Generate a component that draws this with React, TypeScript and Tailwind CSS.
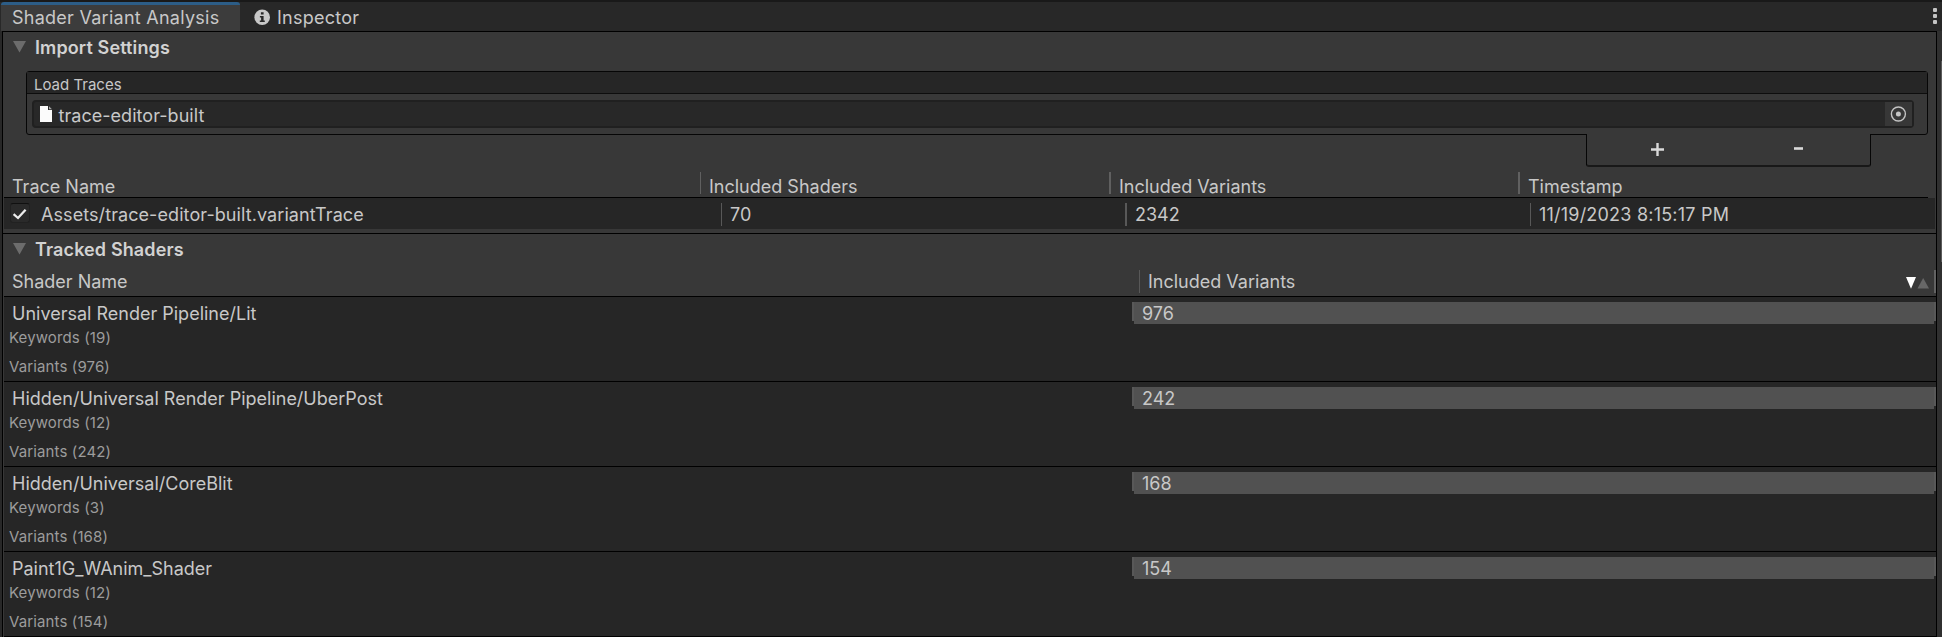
import React from "react";

const shaders = [
  { name: "Universal Render Pipeline/Lit", keywords: 19, variants: 976 },
  { name: "Hidden/Universal Render Pipeline/UberPost", keywords: 12, variants: 242 },
  { name: "Hidden/Universal/CoreBlit", keywords: 3, variants: 168 },
  { name: "Paint1G_WAnim_Shader", keywords: 12, variants: 154 },
];

function Foldout({ title }: { title: string }) {
  return (
    <div className="flex items-start pl-[10px] pt-[5px]">
      <svg className="mt-[4px] h-[12px] w-[13px]" viewBox="0 0 13 12">
        <path d="M0 0H13L6.5 11.5Z" fill="#6c6c6c" />
      </svg>
      <h2 className="pl-[9px] font-semibold tracking-[0.12px] text-[#d2d2d2]">{title}</h2>
    </div>
  );
}

function TabBar() {
  return (
    <div className="flex h-[31px] items-stretch border-t-2 border-[#191919] bg-[#282828] tracking-[0.26px]">
      <div className="ml-px w-[239px] rounded-t-[3px] border-t-[3px] border-[#2c5d87] bg-[#3c3c3c] pl-[11px] pt-[2px]">
        Shader Variant Analysis
      </div>
      <div className="flex grow pl-[14px] pt-[5px]">
        <svg className="mt-[2px] h-[17px] w-[17px]" viewBox="0 0 17 17">
          <circle cx="8.2" cy="8.2" r="7.8" fill="#c8c8c8" />
          <path d="M6.9 3.2h2.7v2.3H6.9zM5.9 6.9h3.7v4.6h1.2v1.6H5.8v-1.6h1.3V8.4H5.9z" fill="#282828" />
        </svg>
        <span className="pl-[6px]">Inspector</span>
      </div>
      <div className="mr-[5px] flex flex-col gap-[2px] pt-[6px]">
        <i className="size-[4px] rounded-[1px] bg-[#c4c4c4]" />
        <i className="size-[4px] rounded-[1px] bg-[#c4c4c4]" />
        <i className="size-[4px] rounded-[1px] bg-[#c4c4c4]" />
      </div>
    </div>
  );
}

function TraceList() {
  return (
    <div className="ml-[23px] mr-[8px]">
      <div className="h-[64px] rounded-[3px] border border-[#060606]">
        <div className="h-[22px] border-b border-[#0d0d0d] bg-[#262626] pl-[7px] pt-[3px] text-[15px] leading-[19px]">
          Load Traces
        </div>
        <div className="ml-[5px] mr-[13px] mt-[6px] flex h-[28px] rounded-[4px] border-2 border-[#202020] bg-[#282828]">
          <svg className="ml-[6px] mt-[4px] h-[16px] w-[12px]" viewBox="0 0 12 16">
            <path d="M0 0H8V4H12V16H0Z" fill="#fbfbfb" />
            <path d="M9 0.3L12 3.3H9Z" fill="#a8a8a8" />
          </svg>
          <span className="grow pl-[6.5px] pt-[3px] tracking-[0.04px]">trace-editor-built</span>
          <div className="w-[27px] bg-[#373737]">
            <svg className="h-[24px] w-[27px]" viewBox="0 0 27 24">
              <circle cx="13.4" cy="12" r="7" fill="none" stroke="#c4c4c4" strokeWidth="1.4" />
              <circle cx="13.4" cy="12" r="2.5" fill="#c4c4c4" />
            </svg>
          </div>
        </div>
      </div>
      <div className="relative -mt-px ml-auto mr-[57px] h-[33px] w-[285px] rounded-b-[3px] border-x border-b-2 border-x-[#060606] border-b-[#181818] bg-[#383838]">
        <svg className="h-[31px] w-[283px]" viewBox="0 0 283 31">
          <path d="M64 15.5H77M70.5 9V22" stroke="#dadada" strokeWidth="2.4" />
          <path d="M207 14.5H216" stroke="#dadada" strokeWidth="2.6" />
        </svg>
      </div>
    </div>
  );
}

function TraceTable() {
  return (
    <div className="ml-px">
      <div className="mr-[8px] flex h-[31px] border-b border-black pt-[5px]">
        <div className="w-[696px] pl-[8px] pt-[4px]">Trace Name</div>
        <div className="h-[22px] w-[409px] border-l border-[#606060] pl-[8px] pt-[4px]">Included Shaders</div>
        <div className="h-[22px] w-[409px] border-l-2 border-[#606060] pl-[8px] pt-[4px]">Included Variants</div>
        <div className="h-[22px] border-l-2 border-[#606060] pl-[8px] pt-[4px]">Timestamp</div>
      </div>
      <div className="mr-px flex h-[31px] bg-[#262626] pt-[5px]">
        <div className="flex w-[717px] pl-[6px]">
          <div className="h-[20px] w-[20px] rounded-[3px] border border-[#212121] border-t-[#101010] bg-[#2a2a2a]">
            <svg className="h-[18px] w-[18px]" viewBox="0 0 18 18">
              <path d="M2.6 10.2L7 14L14.6 5.8" fill="none" stroke="#ececec" strokeWidth="2.3" />
            </svg>
          </div>
          <span className="pl-[11px] pt-px tracking-[0.08px]">Assets/trace-editor-built.variantTrace</span>
        </div>
        <div className="h-[23px] w-[404px] border-l border-[#585858] pl-[8px] pt-px">70</div>
        <div className="h-[23px] w-[405px] border-l-2 border-[#585858] pl-[8px] pt-px">2342</div>
        <div className="h-[23px] border-l border-[#585858] pl-[8px] pt-px tracking-[0.21px]">11/19/2023 8:15:17 PM</div>
      </div>
    </div>
  );
}

function ShaderTable() {
  return (
    <div className="ml-px">
      <div className="flex h-[27px] border-b border-black">
        <div className="w-[1135px] pl-[8px] pt-px">Shader Name</div>
        <div className="flex h-[23px] grow border-l border-[#585858] pl-[8px] pt-px">
          <span className="grow">Included Variants</span>
          <svg className="mr-[5px] mt-[6px] h-[12px] w-[23px]" viewBox="0 0 23 12">
            <path d="M0 0H10L5 11.8Z" fill="#ffffff" />
            <path d="M11.5 11.6H23L17.2 1Z" fill="#676767" />
          </svg>
        </div>
        <div className="h-[23px] w-[2px] bg-[#626262]" />
      </div>
      {shaders.map((s) => (
        <div key={s.name} className="flex h-[85px] border-b border-black bg-[#262626]">
          <div className="w-[1128px] pt-[6px]">
            <div className="pl-[8px]">{s.name}</div>
            <div className="pl-[5px] pt-[4px] text-[15px] leading-[19px] tracking-[0.12px] text-[#9c9c9c]">
              <div>Keywords ({s.keywords})</div>
              <div className="pt-[10px]">Variants ({s.variants})</div>
            </div>
          </div>
          <div className="flex grow pt-[5px]">
            <div className="h-[19px] w-[2px] bg-[#585858]" />
            <div className="h-[22px] grow bg-[#515151] pl-[8px] pt-px">{s.variants}</div>
            <div className="h-[19px] w-[2px] bg-[#585858]" />
          </div>
        </div>
      ))}
    </div>
  );
}

export default function App() {
  return (
    <div className="h-[637px] w-[1942px] overflow-hidden bg-[#282828] font-['Inter',sans-serif] text-[18px] leading-[21px] text-[#c8c8c8]">
      <TabBar />
      <div className="flex h-[606px]">
        <div className="ml-[2px] w-[1935px] border-x border-t border-black bg-[#383838]">
          <section className="h-[39px]">
            <Foldout title="Import Settings" />
          </section>
          <TraceList />
          <TraceTable />
          <section className="mt-[4px] h-[37px] border-t border-black">
            <Foldout title="Tracked Shaders" />
          </section>
          <ShaderTable />
        </div>
        <div className="grow bg-[#303030] pt-[30px]">
          <div className="ml-auto h-[201px] w-px bg-[#5c5c5c]" />
        </div>
      </div>
    </div>
  );
}
